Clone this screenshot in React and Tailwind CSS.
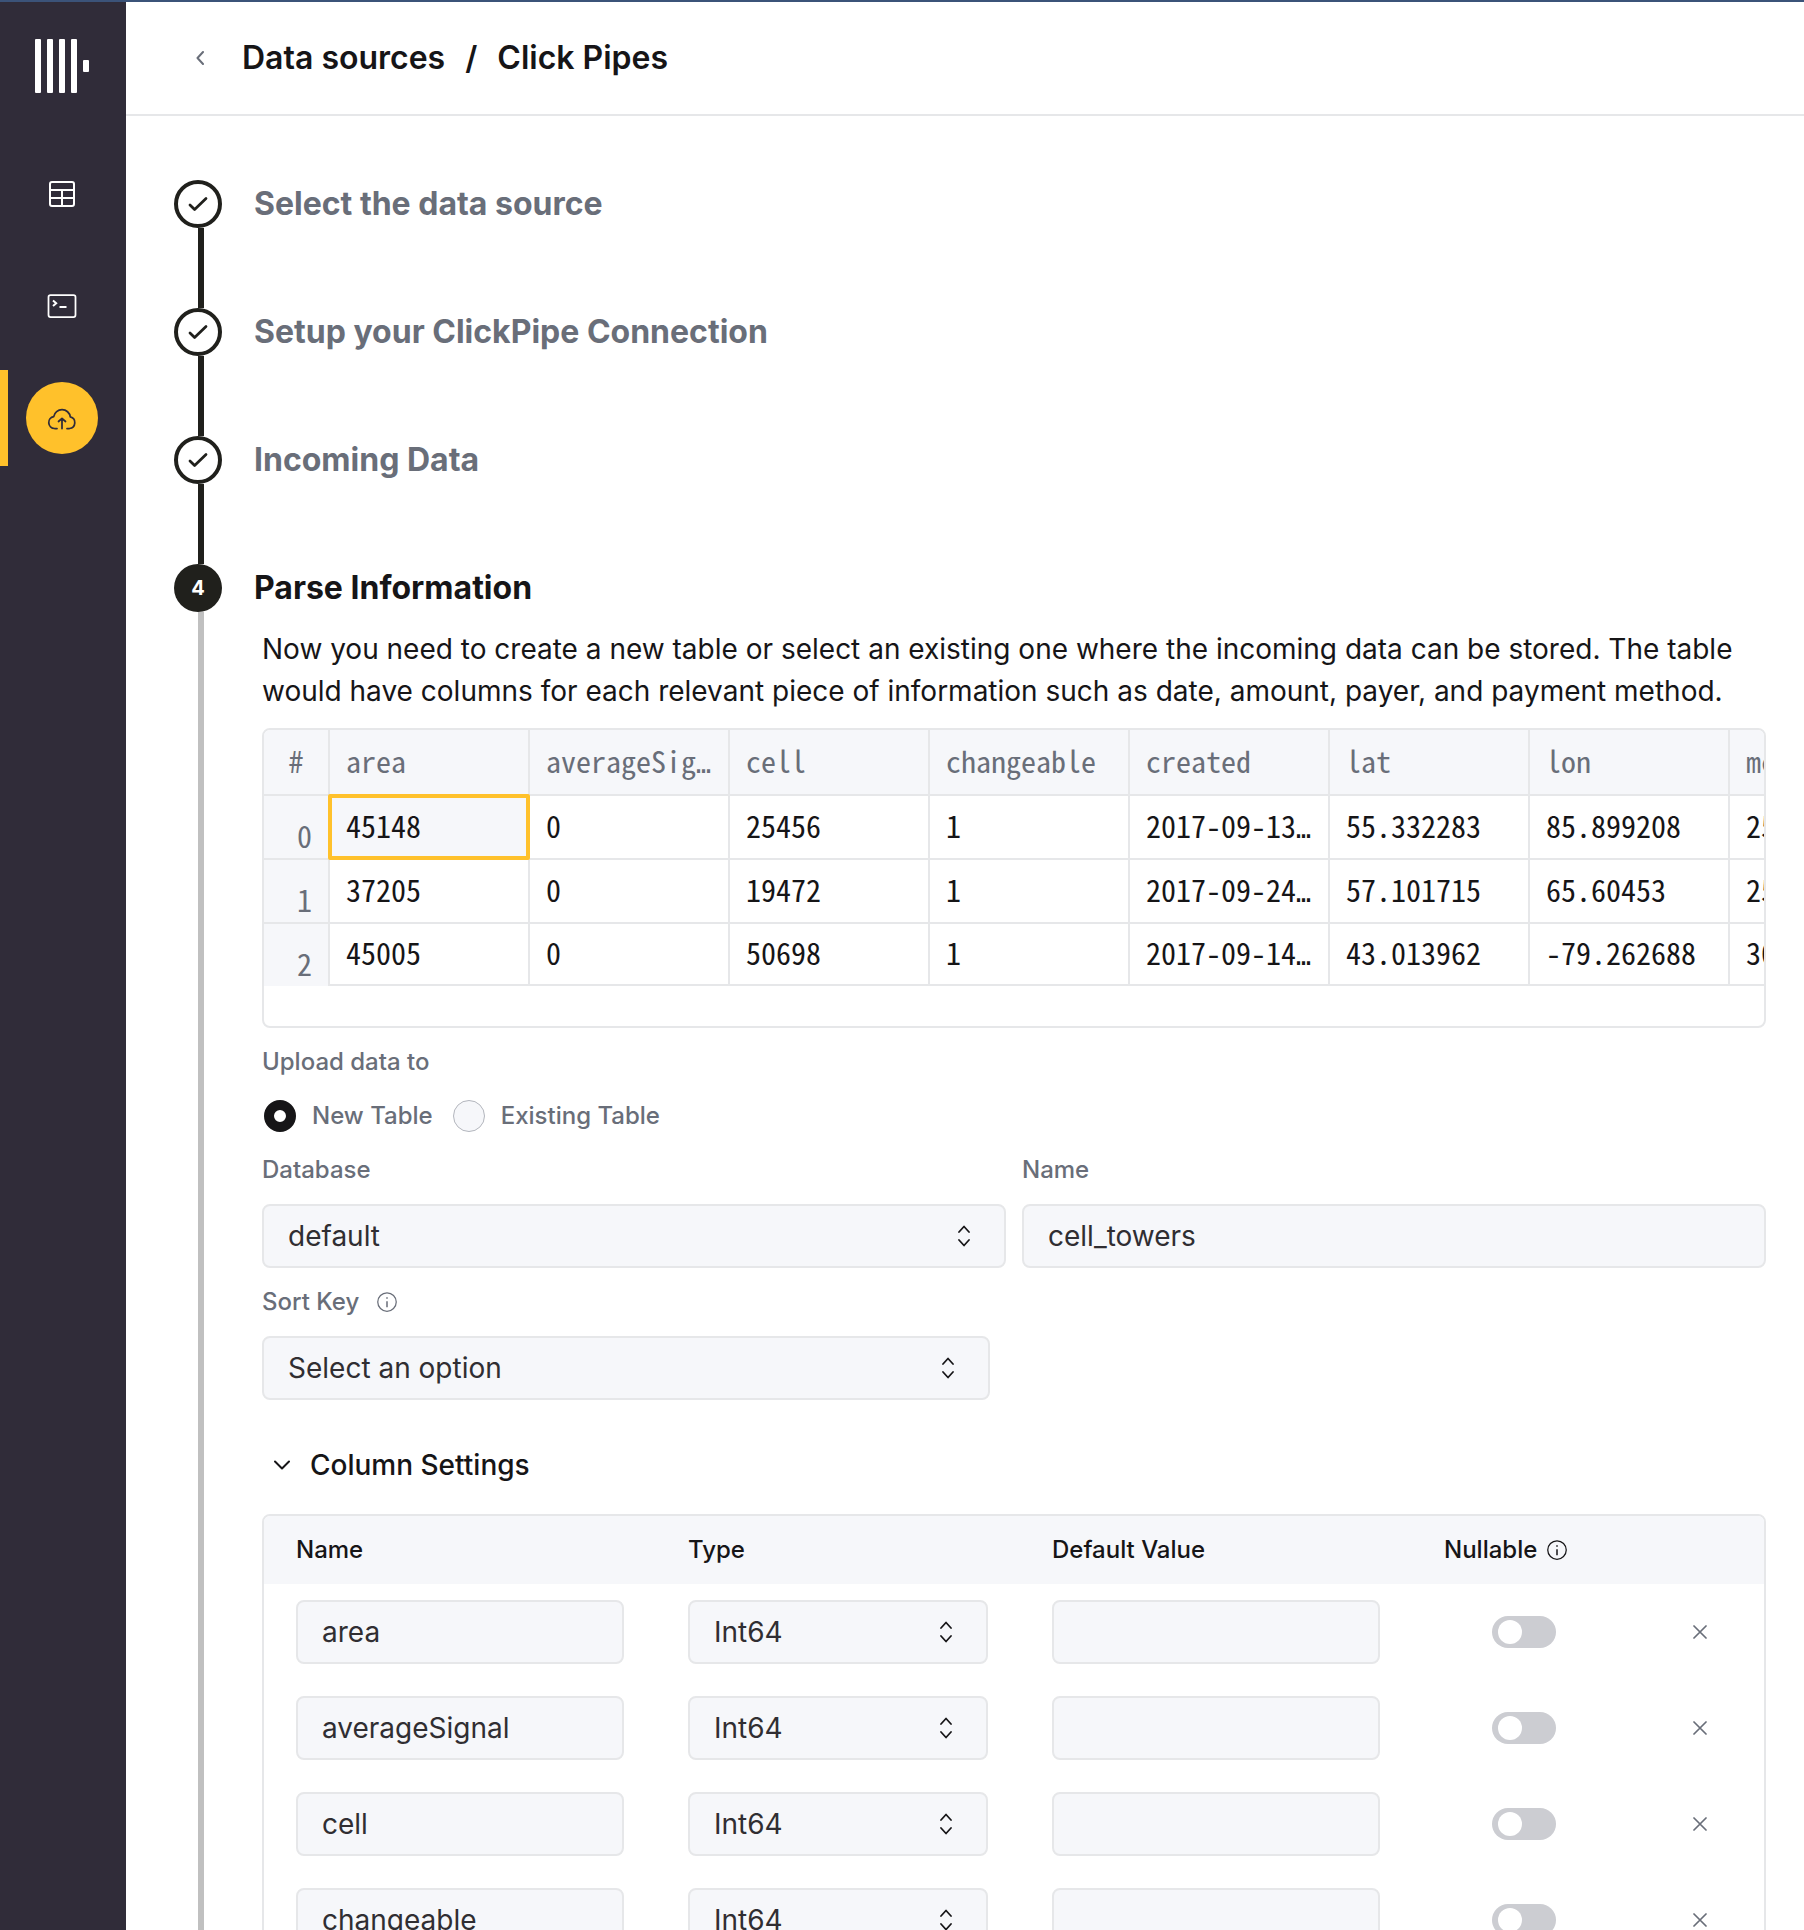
import { useState } from "react";

const previewColumns = ["area", "averageSignal", "cell", "changeable", "created", "lat", "lon", "mcc"];

const previewRows = [
  ["45148", "0", "25456", "1", "2017-09-13 00:00:00", "55.332283", "85.899208", "250"],
  ["37205", "0", "19472", "1", "2017-09-24 00:00:00", "57.101715", "65.60453", "250"],
  ["45005", "0", "50698", "1", "2017-09-14 00:00:00", "43.013962", "-79.262688", "302"],
];

const columnSettings = ["area", "averageSignal", "cell", "changeable"];

const MAX_CELL_CHARS = 11;

const fieldClass =
  "h-16 w-full rounded-lg border-2 border-[#e6e7e9] bg-[#f6f7fa] px-6 text-[28px] text-[#302e32] outline-none";

function Logo() {
  return (
    <svg width="54" height="54" viewBox="0 0 54 54" fill="#fff" aria-hidden="true">
      <rect x="0" y="0" width="6" height="54" rx="1" />
      <rect x="12" y="0" width="6" height="54" rx="1" />
      <rect x="24" y="0" width="6" height="54" rx="1" />
      <rect x="36" y="0" width="6" height="54" rx="1" />
      <rect x="48" y="21" width="6" height="12" rx="1" />
    </svg>
  );
}

function TableIcon() {
  return (
    <svg width="32" height="32" viewBox="0 0 32 32" fill="none" stroke="#fff" strokeWidth="2" aria-hidden="true">
      <rect x="4" y="4" width="24" height="24" rx="2" />
      <path d="M4 12h24M4 20h24M16 12v16" />
    </svg>
  );
}

function TerminalIcon() {
  return (
    <svg width="32" height="32" viewBox="0 0 32 32" fill="none" stroke="#fff" aria-hidden="true">
      <rect x="2.5" y="5" width="27" height="22" rx="2" strokeWidth="1.75" />
      <path d="M7 10.5l3.2 2.8L7 16.1M13.5 17h7" strokeWidth="2" />
    </svg>
  );
}

function CloudUploadIcon() {
  return (
    <svg
      width="32"
      height="32"
      viewBox="0 0 32 32"
      fill="none"
      stroke="#302c39"
      strokeWidth="1.75"
      strokeLinecap="round"
      strokeLinejoin="round"
      aria-hidden="true"
    >
      <path d="M11 26.5H8.5a6 6 0 0 1-.8-11.9 8.4 8.4 0 0 1 16.6 0.3 5.9 5.9 0 0 1-.8 11.6H21" />
      <path d="M16 26.5V17M12.5 19.5L16 16.3l3.5 3.2" />
    </svg>
  );
}

function InfoIcon() {
  return (
    <svg width="20" height="20" viewBox="0 0 20 20" fill="none" stroke="currentColor" aria-hidden="true">
      <circle cx="10" cy="10" r="9.25" strokeWidth="1.25" />
      <path d="M10 9.2v6M10 5.2v1.6" strokeWidth="1.5" />
    </svg>
  );
}

function UpDownIcon() {
  return (
    <svg
      className="pointer-events-none absolute top-1/2 right-9 -translate-y-1/2"
      width="12"
      height="22"
      viewBox="0 0 12 22"
      fill="none"
      stroke="#161517"
      strokeWidth="1.75"
      strokeLinecap="round"
      strokeLinejoin="round"
      aria-hidden="true"
    >
      <path d="M1 7l5-5.5L11 7M1 15l5 5.5L11 15" />
    </svg>
  );
}

function SelectField({ id, label, options }) {
  return (
    <div className="relative">
      <select id={id} aria-label={label} className={fieldClass + " appearance-none"}>
        {options.map((o) => (
          <option key={o}>{o}</option>
        ))}
      </select>
      <UpDownIcon />
    </div>
  );
}

function NavItem({ label, active, children }) {
  return (
    <a href="#" aria-label={label} className="flex h-24 w-full items-center">
      <span className={active ? "h-full w-2 bg-[#ffc12b]" : "h-full w-2"} />
      <span
        className={
          active
            ? "ml-[18px] flex size-18 items-center justify-center rounded-full bg-[#ffc12b]"
            : "ml-[18px] flex size-18 items-center justify-center"
        }
      >
        {children}
      </span>
    </a>
  );
}

function DoneStep({ title }) {
  return (
    <li className="flex h-32 flex-none gap-8">
      <div className="flex w-12 flex-none flex-col">
        <span className="flex size-12 flex-none items-center justify-center rounded-full border-4 border-[#20201c]">
          <svg
            width="20"
            height="16"
            viewBox="0 0 20 16"
            fill="none"
            stroke="#20201c"
            strokeWidth="2.75"
            strokeLinecap="round"
            strokeLinejoin="round"
            aria-hidden="true"
          >
            <path d="M2 9l4.6 4.5L18 2.5" />
          </svg>
        </span>
        <span className="ml-6 w-1.5 flex-1 bg-[#20201c]" />
      </div>
      <h2 className="text-[32px] leading-[48px] font-bold text-[#696e79]">{title}</h2>
    </li>
  );
}

function CellText({ text }) {
  if (text.length <= MAX_CELL_CHARS) return text;
  return (
    <span title={text}>
      {text.slice(0, MAX_CELL_CHARS - 1)}
      <span className="font-['DejaVu_Sans_Mono',monospace] text-[25px] leading-none">…</span>
    </span>
  );
}

function PreviewTable() {
  return (
    <div className="h-[300px] overflow-hidden rounded-lg border-2 border-[#e6e7e9]">
      <table className="w-[1666px] table-fixed border-separate border-spacing-0 font-['Noto_Sans_Mono_CJK_SC','DejaVu_Sans_Mono',monospace] text-[30px] leading-8 whitespace-nowrap">
        <thead>
          <tr className="bg-[#f6f7fa] text-[#696e79]">
            <th className="h-[66px] w-[66px] border-r-2 border-b-2 border-[#e6e7e9] pb-1 text-center font-normal">#</th>
            {previewColumns.map((c) => (
              <th
                key={c}
                className="w-[200px] overflow-hidden border-r-2 border-b-2 border-[#e6e7e9] px-4 pb-1 text-left font-normal"
              >
                <CellText text={c} />
              </th>
            ))}
          </tr>
        </thead>
        <tbody>
          {previewRows.map((row, r) => {
            const last = r === previewRows.length - 1;
            return (
              <tr key={r} className={last ? "h-[62px]" : "h-16"}>
                <td
                  className={
                    last
                      ? "border-r-2 border-[#e6e7e9] bg-[#f6f7fa] pt-4 pr-4 text-right text-[#696e79]"
                      : "border-r-2 border-b-2 border-[#e6e7e9] bg-[#f6f7fa] pt-4 pr-4 text-right text-[#696e79]"
                  }
                >
                  {r}
                </td>
                {row.map((v, c) =>
                  r === 0 && c === 0 ? (
                    <td key={c} className="relative border-r-2 border-b-2 border-[#e6e7e9] bg-[#f6f7fa] px-4 pb-1 text-[#161517]">
                      <CellText text={v} />
                      <span className="absolute -inset-0.5 rounded-xs border-4 border-[#ffc12b]" />
                    </td>
                  ) : (
                    <td key={c} className="overflow-hidden border-r-2 border-b-2 border-[#e6e7e9] px-4 pb-1 text-[#161517]">
                      <CellText text={v} />
                    </td>
                  )
                )}
              </tr>
            );
          })}
        </tbody>
      </table>
    </div>
  );
}

function TargetRadio({ value, label, checked, onSelect }) {
  return (
    <label className="flex items-center gap-4">
      <input
        type="radio"
        name="target"
        value={value}
        checked={checked}
        onChange={() => onSelect(value)}
        className="size-8 appearance-none rounded-full border border-[#b3b6bd] bg-[#f6f7fa] checked:border-[10px] checked:border-[#161517] checked:bg-white"
      />
      {label}
    </label>
  );
}

function ColumnTable() {
  return (
    <div className="overflow-hidden rounded-lg border-2 border-[#e6e7e9]">
      <table className="w-full table-fixed border-separate border-spacing-0">
        <colgroup>
          <col />
          <col className="w-[364px]" />
          <col />
          <col className="w-[224px]" />
          <col className="w-[128px]" />
        </colgroup>
        <thead>
          <tr className="h-[68px] bg-[#f6f7fa] text-left text-2xl text-[#161517]">
            <th className="px-8 font-medium">Name</th>
            <th className="px-8 font-medium">Type</th>
            <th className="px-8 font-medium">Default Value</th>
            <th className="pl-8 font-medium">
              <span className="flex items-center gap-2.5">
                Nullable <InfoIcon />
              </span>
            </th>
            <th aria-label="Remove" />
          </tr>
        </thead>
        <tbody>
          {columnSettings.map((name) => (
            <tr key={name}>
              <td className="px-8 py-4">
                <input aria-label="Name" defaultValue={name} className={fieldClass} />
              </td>
              <td className="px-8 py-4">
                <SelectField label={name + " type"} options={["Int64", "String", "DateTime"]} />
              </td>
              <td className="px-8 py-4">
                <input aria-label={name + " default value"} className={fieldClass} />
              </td>
              <td className="py-4">
                <input
                  type="checkbox"
                  role="switch"
                  aria-label={name + " nullable"}
                  className="mx-auto flex h-8 w-16 appearance-none items-center rounded-full bg-[#cccdd2] px-1.5 before:size-6 before:rounded-full before:bg-white checked:justify-end checked:bg-[#161517]"
                />
              </td>
              <td className="py-4">
                <button type="button" aria-label={"Remove " + name} className="mx-auto flex size-8 items-center justify-center">
                  <svg
                    width="14"
                    height="14"
                    viewBox="0 0 14 14"
                    fill="none"
                    stroke="#696e79"
                    strokeWidth="1.75"
                    strokeLinecap="round"
                    aria-hidden="true"
                  >
                    <path d="M1 1l12 12M13 1L1 13" />
                  </svg>
                </button>
              </td>
            </tr>
          ))}
        </tbody>
      </table>
    </div>
  );
}

export default function App() {
  const [target, setTarget] = useState("new");
  return (
    <div className="flex h-screen flex-col border-t-2 border-[#3b5379] bg-white font-['Inter',sans-serif] text-[#161517]">
      <div className="flex min-h-0 flex-1">
        <nav className="flex w-[126px] flex-none flex-col bg-[#302c39]">
          <div className="pt-[37px] pb-[53px] pl-[35px]">
            <Logo />
          </div>
          <div className="flex flex-col gap-4">
            <NavItem label="Tables">
              <TableIcon />
            </NavItem>
            <NavItem label="SQL console">
              <TerminalIcon />
            </NavItem>
            <NavItem label="Data sources" active>
              <CloudUploadIcon />
            </NavItem>
          </div>
        </nav>
        <main className="flex min-w-0 flex-1 flex-col">
          <header className="flex h-[114px] flex-none items-center gap-[34px] border-b-2 border-[#e6e7e9] pl-[66px] text-[32px] font-semibold">
            <button type="button" aria-label="Back" className="flex h-8 w-4 items-center justify-center">
              <svg
                width="8"
                height="14"
                viewBox="0 0 8 14"
                fill="none"
                stroke="#696e79"
                strokeWidth="2"
                strokeLinecap="round"
                strokeLinejoin="round"
                aria-hidden="true"
              >
                <path d="M7 1L1.5 7 7 13" />
              </svg>
            </button>
            <h1 className="flex gap-5">
              <a href="#">Data sources</a>
              <span>/</span>
              <span>Click Pipes</span>
            </h1>
          </header>
          <ol className="flex min-h-0 flex-1 flex-col overflow-y-auto pt-16 pr-[38px] pl-12 [scrollbar-width:none]">
            <DoneStep title="Select the data source" />
            <DoneStep title="Setup your ClickPipe Connection" />
            <DoneStep title="Incoming Data" />
            <li className="flex flex-none gap-8">
              <div className="flex w-12 flex-none flex-col">
                <span className="flex size-12 flex-none items-center justify-center rounded-full bg-[#20201c] text-xl font-bold text-white">
                  4
                </span>
                <span className="ml-6 w-1.5 flex-1 bg-[#c0c0c0]" />
              </div>
              <div className="min-w-0 flex-1">
                <h2 className="text-[32px] leading-[48px] font-bold">Parse Information</h2>
                <div className="flex flex-col gap-4 pt-4 pl-2">
                  <p className="text-[28px] leading-[42px]">
                    Now you need to create a new table or select an existing one where the incoming data can be stored.
                    The table would have columns for each relevant piece of information such as date, amount, payer, and
                    payment method.
                  </p>
                  <PreviewTable />
                  <fieldset className="flex flex-col gap-4 text-2xl leading-9 font-medium text-[#696e79]">
                    <legend className="contents">
                      <span>Upload data to</span>
                    </legend>
                    <div className="flex h-10 items-center gap-5 pl-0.5">
                      <TargetRadio value="new" label="New Table" checked={target === "new"} onSelect={setTarget} />
                      <TargetRadio
                        value="existing"
                        label="Existing Table"
                        checked={target === "existing"}
                        onSelect={setTarget}
                      />
                    </div>
                  </fieldset>
                  <div className="grid grid-cols-2 gap-4">
                    <div className="flex flex-col gap-4">
                      <label htmlFor="database" className="text-2xl leading-9 font-medium text-[#696e79]">
                        Database
                      </label>
                      <SelectField id="database" options={["default"]} />
                    </div>
                    <div className="flex flex-col gap-4">
                      <label htmlFor="table-name" className="text-2xl leading-9 font-medium text-[#696e79]">
                        Name
                      </label>
                      <input id="table-name" defaultValue="cell_towers" className={fieldClass} />
                    </div>
                  </div>
                  <div className="grid grid-cols-2 gap-12">
                    <div className="flex flex-col gap-4">
                      <label
                        htmlFor="sort-key"
                        className="flex items-center gap-[18px] text-2xl leading-9 font-medium text-[#696e79]"
                      >
                        Sort Key <InfoIcon />
                      </label>
                      <SelectField id="sort-key" options={["Select an option"]} />
                    </div>
                  </div>
                  <button type="button" className="mt-4 flex h-[66px] items-center gap-5 self-start pl-3 text-[28px] font-medium">
                    <svg
                      width="16"
                      height="10"
                      viewBox="0 0 16 10"
                      fill="none"
                      stroke="#161517"
                      strokeWidth="2"
                      strokeLinecap="round"
                      strokeLinejoin="round"
                      aria-hidden="true"
                    >
                      <path d="M1 1.5l7 7 7-7" />
                    </svg>
                    Column Settings
                  </button>
                  <ColumnTable />
                </div>
              </div>
            </li>
          </ol>
        </main>
      </div>
    </div>
  );
}
